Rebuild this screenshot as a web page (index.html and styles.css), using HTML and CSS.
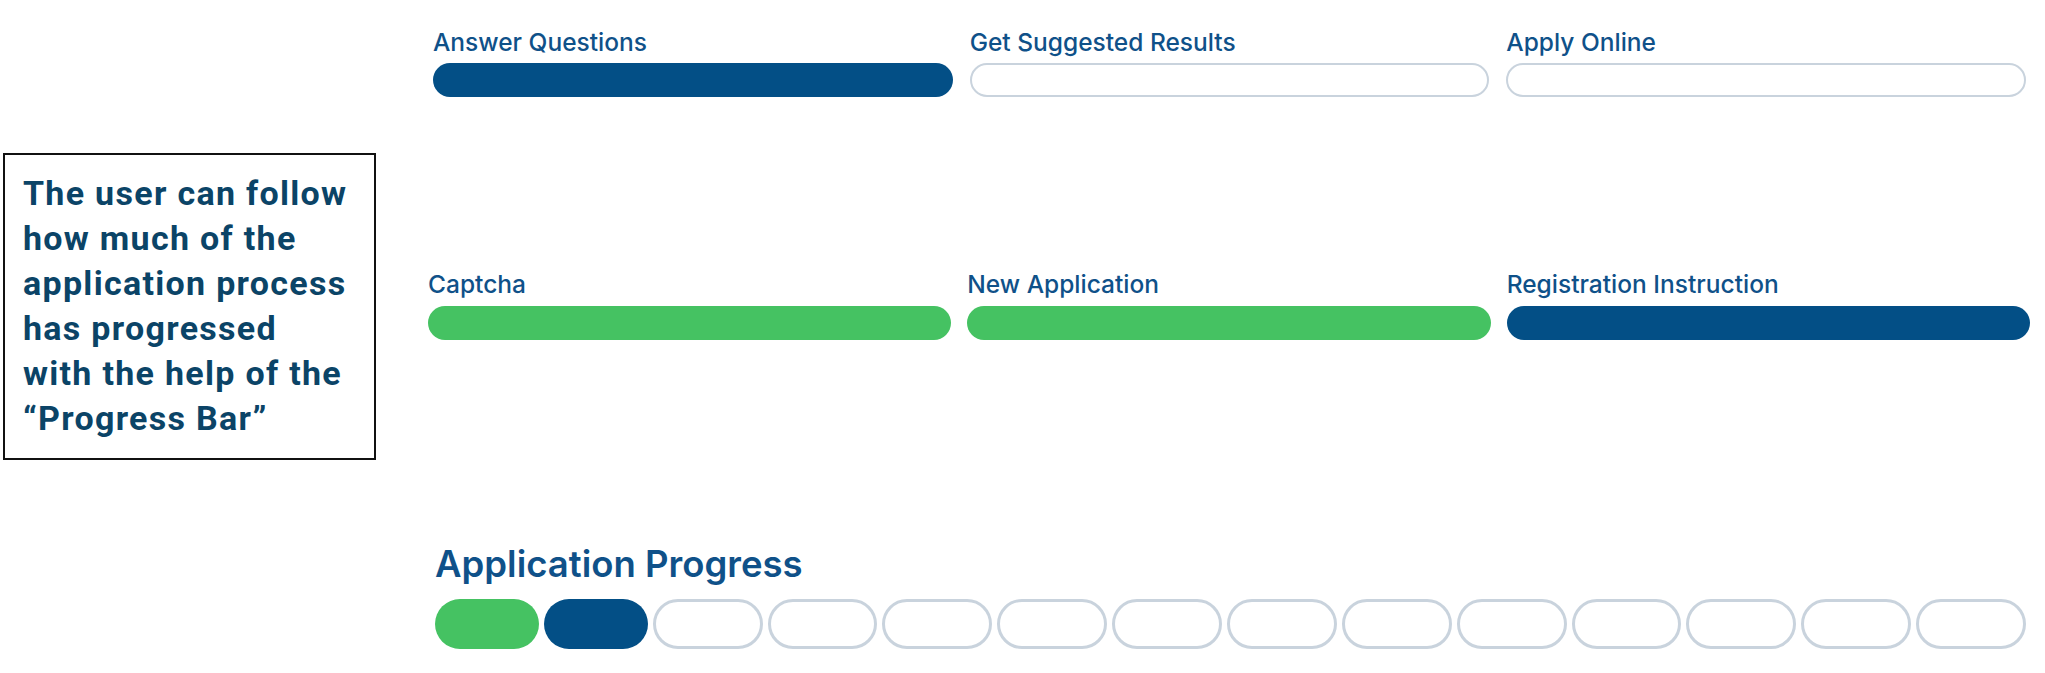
FILE: index.html
```html
<!DOCTYPE html>
<html lang="en">
<head>
<meta charset="utf-8">
<title>Application Progress</title>
<link rel="stylesheet" href="styles.css">
</head>
<body>
<main class="page">
  <aside class="note">The user can follow<br>how much of the<br>application process<br>has progressed<br>with the help of the<br>“Progress Bar”</aside>
  <section class="flows">
    <div class="stepper stepper-top">
      <div class="step"><span class="step-label">Answer Questions</span><span class="bar bar-current"></span></div>
      <div class="step"><span class="step-label">Get Suggested Results</span><span class="bar bar-empty"></span></div>
      <div class="step"><span class="step-label">Apply Online</span><span class="bar bar-empty"></span></div>
    </div>
    <div class="stepper stepper-mid">
      <div class="step"><span class="step-label">Captcha</span><span class="bar bar-done"></span></div>
      <div class="step"><span class="step-label">New Application</span><span class="bar bar-done"></span></div>
      <div class="step"><span class="step-label">Registration Instruction</span><span class="bar bar-current"></span></div>
    </div>
    <div class="progress">
      <h2 class="progress-title">Application Progress</h2>
      <div class="pills">
        <span class="pill bar-done"></span>
        <span class="pill bar-current"></span>
        <span class="pill bar-empty"></span>
        <span class="pill bar-empty"></span>
        <span class="pill bar-empty"></span>
        <span class="pill bar-empty"></span>
        <span class="pill bar-empty"></span>
        <span class="pill bar-empty"></span>
        <span class="pill bar-empty"></span>
        <span class="pill bar-empty"></span>
        <span class="pill bar-empty"></span>
        <span class="pill bar-empty"></span>
        <span class="pill bar-empty"></span>
        <span class="pill bar-empty"></span>
      </div>
    </div>
  </section>
</main>
</body>
</html>
```
FILE: styles.css
```css
* { box-sizing: border-box; }

html, body {
  margin: 0;
  padding: 0;
  background: #ffffff;
}

.page {
  display: flex;
  width: 2045px;
  height: 673px;
  font-family: Inter, "Noto Sans", sans-serif;
}

.note {
  flex: 0 0 373px;
  height: 307px;
  margin: 153px 0 0 3px;
  padding: 16px 4px 0 18px;
  border: 2px solid #111111;
  font-family: Roboto, "Liberation Sans", sans-serif;
  font-weight: 700;
  font-size: 34px;
  letter-spacing: 1.3px;
  line-height: 45px;
  color: #0b4467;
  white-space: nowrap;
}

.flows {
  display: flex;
  flex-direction: column;
  width: 1602px;
  margin-left: 52px;
}

.stepper {
  display: grid;
  grid-template-columns: repeat(3, 1fr);
}

.stepper-top {
  margin: 28px 4px 0 5px;
  column-gap: 17px;
}

.stepper-mid {
  margin-top: 173px;
  column-gap: 16px;
}

.step {
  display: flex;
  flex-direction: column;
  gap: 7px;
}

.stepper-mid .step { gap: 8px; }

.step-label {
  font-size: 24.5px;
  line-height: 28px;
  font-weight: 500;
  color: #0f5189;
  white-space: nowrap;
}

.bar {
  display: block;
  height: 34px;
  border-radius: 17px;
}

.bar-current { background: #034f86; }
.bar-done { background: #45c262; }
.bar-empty {
  background: #ffffff;
  border: 2px solid #c9d3dd;
}

.progress {
  margin: 202px 4px 0 7px;
}

.progress-title {
  margin: 0;
  font-size: 36.5px;
  line-height: 44px;
  font-weight: 600;
  color: #0f5189;
}

.pills {
  display: flex;
  gap: 5px;
  margin-top: 13px;
}

.pill {
  flex: 1 1 0;
  height: 50px;
  border-radius: 25px;
}

.pill.bar-empty { border-width: 3px; }
```
